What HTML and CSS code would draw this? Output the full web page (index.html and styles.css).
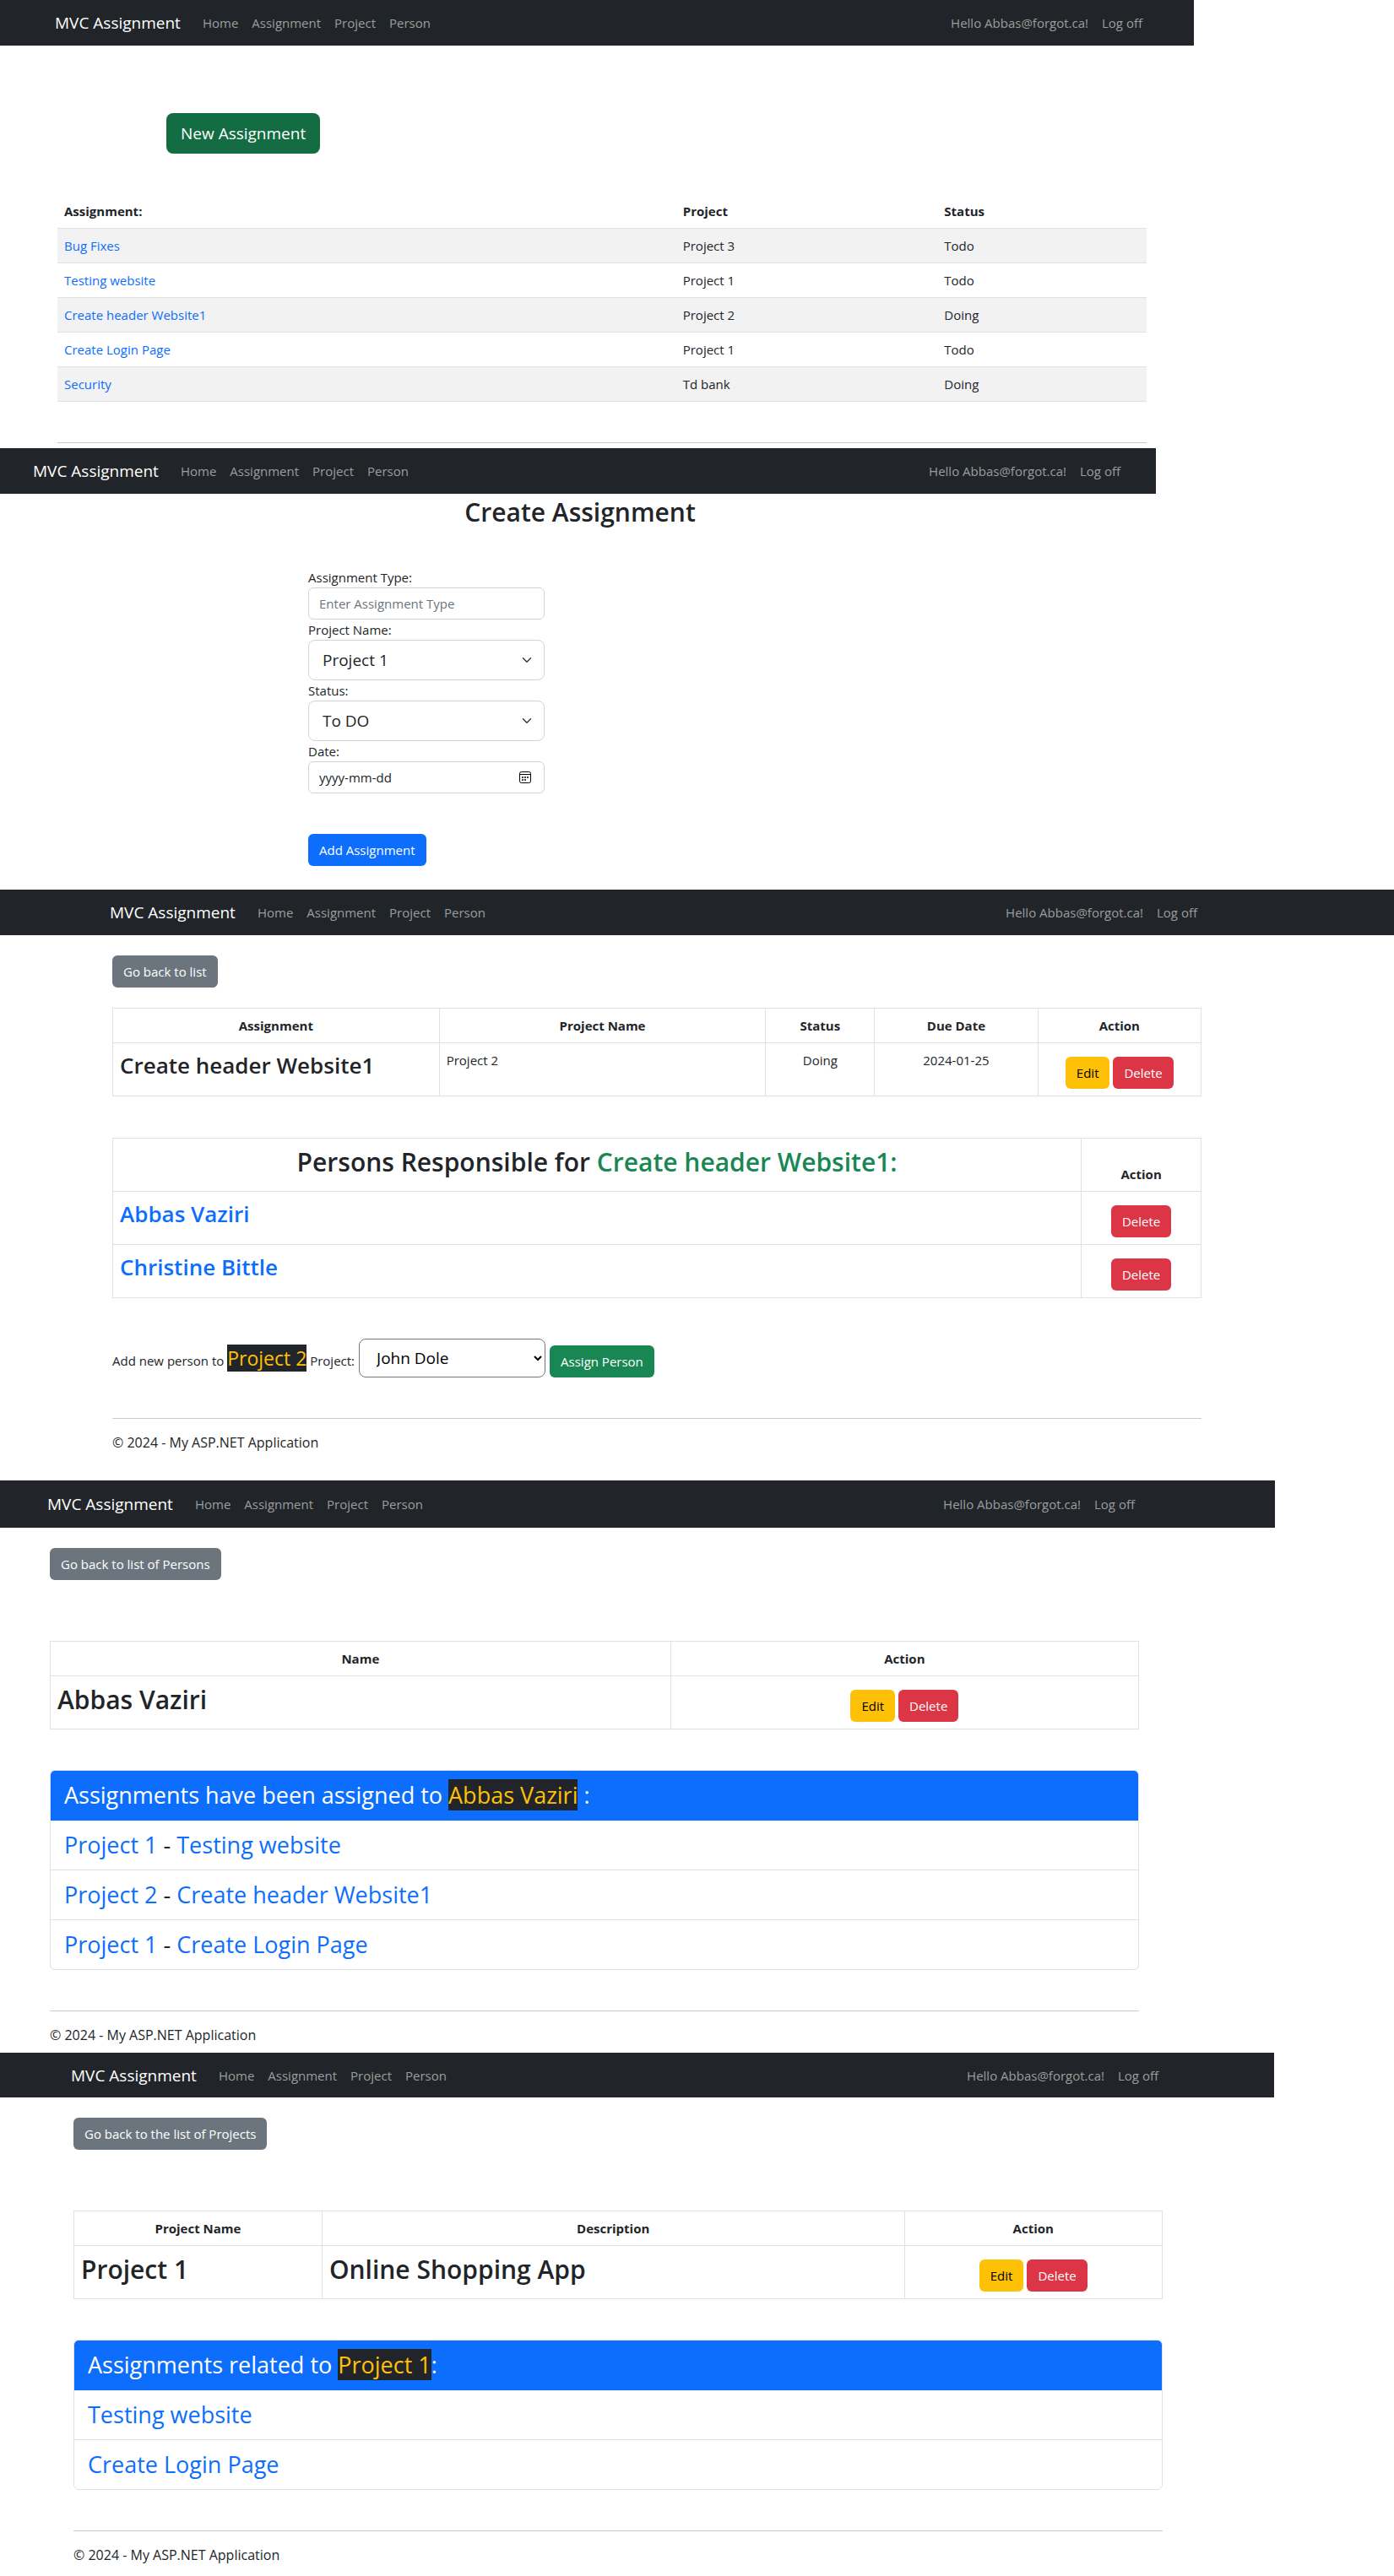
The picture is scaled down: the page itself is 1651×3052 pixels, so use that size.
FILE: index.html
```html
<!DOCTYPE html>
<html lang="en">
<head>
<meta charset="utf-8">
<meta name="viewport" content="width=device-width, initial-scale=1">
<title>MVC Assignment</title>
<link rel="stylesheet" href="styles.css">
</head>
<body>

<section class="screen screen-list">
  <header class="navbar">
    <nav class="nav-inner">
      <a class="brand" href="#">MVC Assignment</a>
      <a class="nav-link" href="#">Home</a>
      <a class="nav-link" href="#">Assignment</a>
      <a class="nav-link" href="#">Project</a>
      <a class="nav-link" href="#">Person</a>
      <a class="nav-link nav-user" href="#">Hello Abbas@forgot.ca!</a>
      <a class="nav-link" href="#">Log off</a>
    </nav>
  </header>
  <div class="content">
    <button class="btn btn-lg btn-new" type="button">New Assignment</button>
    <table class="table table-striped">
      <colgroup><col class="w-list-name"><col class="w-list-project"><col></colgroup>
      <thead><tr><th>Assignment:</th><th>Project</th><th>Status</th></tr></thead>
      <tbody>
        <tr><td><a href="#">Bug Fixes</a></td><td>Project 3</td><td>Todo</td></tr>
        <tr><td><a href="#">Testing website</a></td><td>Project 1</td><td>Todo</td></tr>
        <tr><td><a href="#">Create header Website1</a></td><td>Project 2</td><td>Doing</td></tr>
        <tr><td><a href="#">Create Login Page</a></td><td>Project 1</td><td>Todo</td></tr>
        <tr><td><a href="#">Security</a></td><td>Td bank</td><td>Doing</td></tr>
      </tbody>
    </table>
    <hr>
  </div>
</section>

<section class="screen screen-create">
  <header class="navbar">
    <nav class="nav-inner">
      <a class="brand" href="#">MVC Assignment</a>
      <a class="nav-link" href="#">Home</a>
      <a class="nav-link" href="#">Assignment</a>
      <a class="nav-link" href="#">Project</a>
      <a class="nav-link" href="#">Person</a>
      <a class="nav-link nav-user" href="#">Hello Abbas@forgot.ca!</a>
      <a class="nav-link" href="#">Log off</a>
    </nav>
  </header>
  <div class="content">
    <h1 class="title title-center">Create Assignment</h1>
    <form class="create-form">
      <label for="type">Assignment Type:</label>
      <input class="control" id="type" type="text" placeholder="Enter Assignment Type">
      <label for="project">Project Name:</label>
      <div class="field">
        <select class="control control-lg" id="project"><option>Project 1</option></select>
        <svg class="field-icon" width="16" height="12" viewBox="0 0 16 16" fill="none" stroke="#343a40" stroke-width="2" stroke-linecap="round" stroke-linejoin="round"><path d="m2 5 6 6 6-6"/></svg>
      </div>
      <label for="status">Status:</label>
      <div class="field">
        <select class="control control-lg" id="status"><option>To DO</option></select>
        <svg class="field-icon" width="16" height="12" viewBox="0 0 16 16" fill="none" stroke="#343a40" stroke-width="2" stroke-linecap="round" stroke-linejoin="round"><path d="m2 5 6 6 6-6"/></svg>
      </div>
      <label for="date">Date:</label>
      <div class="field">
        <input class="control control-date" id="date" type="text" placeholder="yyyy-mm-dd">
        <svg class="field-icon" width="17" height="14" viewBox="0 0 17 14"><rect x=".5" y=".5" width="13" height="13" rx="2" fill="none" stroke="#000"/><path d="M1 3.500h12" stroke="#000"/><path fill="#444" d="M3 6h2v2H3zM6 6h2v2H6zM9 6h2v2H9zM3 9h2v2H3zM6 9h2v2H6z"/></svg>
      </div>
      <button class="btn btn-primary" type="button">Add Assignment</button>
    </form>
  </div>
</section>

<section class="screen screen-assignment">
  <header class="navbar">
    <nav class="nav-inner">
      <a class="brand" href="#">MVC Assignment</a>
      <a class="nav-link" href="#">Home</a>
      <a class="nav-link" href="#">Assignment</a>
      <a class="nav-link" href="#">Project</a>
      <a class="nav-link" href="#">Person</a>
      <a class="nav-link nav-user" href="#">Hello Abbas@forgot.ca!</a>
      <a class="nav-link" href="#">Log off</a>
    </nav>
  </header>
  <div class="content">
    <button class="btn btn-secondary" type="button">Go back to list</button>
    <table class="table table-bordered">
      <colgroup><col class="w-30"><col class="w-30"><col class="w-10"><col class="w-15"><col class="w-15"></colgroup>
      <thead><tr><th>Assignment</th><th>Project Name</th><th>Status</th><th>Due Date</th><th>Action</th></tr></thead>
      <tbody>
        <tr>
          <td><h3 class="subtitle">Create header Website1</h3></td>
          <td>Project 2</td>
          <td class="center">Doing</td>
          <td class="center">2024-01-25</td>
          <td><div class="actions"><button class="btn btn-warning" type="button">Edit</button><button class="btn btn-danger" type="button">Delete</button></div></td>
        </tr>
      </tbody>
    </table>
    <table class="table table-bordered">
      <colgroup><col class="w-89"><col></colgroup>
      <thead><tr><th><h2 class="title">Persons Responsible for <span class="green">Create header Website1:</span></h2></th><th>Action</th></tr></thead>
      <tbody>
        <tr><td><h3 class="subtitle"><a href="#">Abbas Vaziri</a></h3></td><td><div class="actions"><button class="btn btn-danger" type="button">Delete</button></div></td></tr>
        <tr><td><h3 class="subtitle"><a href="#">Christine Bittle</a></h3></td><td><div class="actions"><button class="btn btn-danger" type="button">Delete</button></div></td></tr>
      </tbody>
    </table>
    <form class="assign-form">
      <label for="person">Add new person to <mark class="mark-md">Project 2</mark> Project:</label>
      <div class="field field-person">
        <select class="control control-lg control-plain" id="person"><option>John Dole</option></select>
        <svg class="field-icon" width="10" height="7" viewBox="0 0 10 7" fill="none" stroke="#000" stroke-width="2"><path d="m1 1 4 4 4-4"/></svg>
      </div>
      <button class="btn btn-success" type="button">Assign Person</button>
    </form>
    <hr>
    <footer>© 2024 - My ASP.NET Application</footer>
  </div>
</section>

<section class="screen screen-person">
  <header class="navbar">
    <nav class="nav-inner">
      <a class="brand" href="#">MVC Assignment</a>
      <a class="nav-link" href="#">Home</a>
      <a class="nav-link" href="#">Assignment</a>
      <a class="nav-link" href="#">Project</a>
      <a class="nav-link" href="#">Person</a>
      <a class="nav-link nav-user" href="#">Hello Abbas@forgot.ca!</a>
      <a class="nav-link" href="#">Log off</a>
    </nav>
  </header>
  <div class="content">
    <button class="btn btn-secondary" type="button">Go back to list of Persons</button>
    <table class="table table-bordered table-lower">
      <colgroup><col class="w-57"><col></colgroup>
      <thead><tr><th>Name</th><th>Action</th></tr></thead>
      <tbody>
        <tr>
          <td><h2 class="title">Abbas Vaziri</h2></td>
          <td><div class="actions"><button class="btn btn-warning" type="button">Edit</button><button class="btn btn-danger" type="button">Delete</button></div></td>
        </tr>
      </tbody>
    </table>
    <ul class="list">
      <li class="list-head">Assignments have been assigned to <mark>Abbas Vaziri</mark> :</li>
      <li><a href="#">Project 1</a> - <a href="#">Testing website</a></li>
      <li><a href="#">Project 2</a> - <a href="#">Create header Website1</a></li>
      <li><a href="#">Project 1</a> - <a href="#">Create Login Page</a></li>
    </ul>
    <hr>
    <footer>© 2024 - My ASP.NET Application</footer>
  </div>
</section>

<section class="screen screen-project">
  <header class="navbar">
    <nav class="nav-inner">
      <a class="brand" href="#">MVC Assignment</a>
      <a class="nav-link" href="#">Home</a>
      <a class="nav-link" href="#">Assignment</a>
      <a class="nav-link" href="#">Project</a>
      <a class="nav-link" href="#">Person</a>
      <a class="nav-link nav-user" href="#">Hello Abbas@forgot.ca!</a>
      <a class="nav-link" href="#">Log off</a>
    </nav>
  </header>
  <div class="content">
    <button class="btn btn-secondary" type="button">Go back to the list of Projects</button>
    <table class="table table-bordered table-lower">
      <colgroup><col class="w-project-name"><col class="w-project-desc"><col></colgroup>
      <thead><tr><th>Project Name</th><th>Description</th><th>Action</th></tr></thead>
      <tbody>
        <tr>
          <td><h2 class="title">Project 1</h2></td>
          <td><h2 class="title">Online Shopping App</h2></td>
          <td><div class="actions"><button class="btn btn-warning" type="button">Edit</button><button class="btn btn-danger" type="button">Delete</button></div></td>
        </tr>
      </tbody>
    </table>
    <ul class="list">
      <li class="list-head">Assignments related to <mark>Project 1</mark>:</li>
      <li><a href="#">Testing website</a></li>
      <li><a href="#">Create Login Page</a></li>
    </ul>
    <hr>
    <footer>© 2024 - My ASP.NET Application</footer>
  </div>
</section>

</body>
</html>
```
FILE: styles.css
```css
*, *::before, *::after { box-sizing: border-box; }

body {
  margin: 0;
  background: #fff;
  color: #212529;
  font: 15px/24px "Open Sans", "Noto Sans", sans-serif;
}

a { color: #0d6efd; text-decoration: none; }

/* Each screen keeps its own left gutter and bar width */
.screen { --gutter: 64px; --bar: 100%; }
.screen-list { --gutter: 64px; --bar: 1414px; }
.screen-create { --gutter: 38px; --bar: 1369px; }
.screen-assignment { --gutter: 129px; }
.screen-person { --gutter: 55px; --bar: 1510px; }
.screen-project { --gutter: 83px; --bar: 1509px; }

.navbar {
  max-width: var(--bar);
  padding: 7px 0 7px var(--gutter);
  background: #212529;
}
.nav-inner {
  display: flex;
  align-items: center;
  max-width: 1297px;
  height: 40px;
}
.screen-person .nav-inner { height: 42px; }
.screen-project .nav-inner { height: 39px; }
.brand { margin: 0 18px 0 1px; color: #fff; font-size: 19px; }
.nav-link { padding: 0 8px; color: #9b9d9e; }
.nav-user { margin-left: auto; }

.content {
  display: flow-root;
  max-width: calc(1294px + var(--gutter));
  padding-left: calc(var(--gutter) + 4px);
}

.btn {
  height: 38px;
  padding: 0 13px;
  border: 0;
  border-radius: 6px;
  color: #fff;
  font: inherit;
  white-space: nowrap;
}
.btn-lg { height: 48px; padding: 0 17px; border-radius: 8px; font-size: 19px; }
.btn-new { background: #146c43; }
.btn-primary { background: #0d6efd; }
.btn-secondary { background: #6c757d; }
.btn-success { background: #198754; }
.btn-warning { background: #ffc107; color: #000; }
.btn-danger { background: #dc3545; }

.table { width: 100%; border-collapse: collapse; table-layout: fixed; }
.table th, .table td { padding: 8px; vertical-align: top; }
.table th { font-weight: 700; vertical-align: bottom; }
.table-striped { text-align: left; }
.table-striped tr { border-bottom: 1px solid #dee2e6; }
.table-striped tbody tr:nth-child(odd) { background: #f2f2f2; }
.table-bordered th, .table-bordered td { border: 1px solid #dee2e6; }
.table-bordered th, .center { text-align: center; }

.w-list-name { width: 56.8%; }
.w-list-project { width: 24%; }
.w-10 { width: 10%; }
.w-15 { width: 15%; }
.w-30 { width: 30%; }
.w-57 { width: 57%; }
.w-89 { width: 89%; }
.w-project-name { width: 22.8%; }
.w-project-desc { width: 53.5%; }

.title { margin: 0 0 6px; font-size: 30px; font-weight: 600; line-height: 40px; }
.title-center { text-align: center; }
.subtitle { margin: 0 0 6px; font-size: 26px; font-weight: 600; line-height: 36px; }
.green { color: #198754; }
.actions { display: flex; justify-content: center; gap: 4px; padding-top: 8px; }

mark { background: #212529; color: #ffc107; }
.mark-md { font-size: 23px; }

hr { margin: 48px 0 0; border: 0; border-top: 1px solid #c8c9ca; }
footer { padding: 16px 0 0; font-size: 16px; }

/* Form controls */
.control {
  display: block;
  width: 100%;
  height: 38px;
  padding: 0 12px;
  border: 1px solid #ced4da;
  border-radius: 6px;
  background: #fff;
  color: #212529;
  font: inherit;
  appearance: none;
}
.control::placeholder { color: #6c757d; opacity: 1; }
.control-date::placeholder { color: #212529; }
.control-lg { height: 48px; padding: 0 16px; border-radius: 8px; font-size: 19px; }
.control-plain { height: 46px; padding-left: 20px; border-color: #767676; color: #000; }
.field { display: grid; align-items: center; }
.field > * { grid-area: 1 / 1; }
.field-icon { justify-self: end; margin-right: 13px; pointer-events: none; }
.field-person { width: 221px; }
.field-person .field-icon { margin-right: 4px; }

.create-form { display: grid; width: 280px; margin: 45px 0 0 323px; }
.create-form .btn { justify-self: start; margin-top: 48px; }
.assign-form { display: flex; align-items: flex-end; gap: 5px; height: 46px; margin-top: 48px; }
.assign-form label { line-height: 40px; }

/* Grouped list */
.list {
  margin: 48px 0 0;
  padding: 0;
  border: 1px solid #dee2e6;
  border-radius: 6px;
  overflow: hidden;
  list-style: none;
  font-size: 27px;
  line-height: 42px;
}
.list li { padding: 8px 16px; }
.list li + li { border-top: 1px solid #dee2e6; }
.list .list-head { margin: -1px -1px 0; padding: 9px 17px; background: #0d6efd; color: #fff; }
.list .list-head + li { border-top: 0; }

/* Vertical rhythm of the individual screens */
.screen-list .btn-new { display: block; margin: 80px 0 0 129px; }
.screen-list .table { margin-top: 48px; }
.screen-list { padding-bottom: 6px; }
.screen-create .title { margin-top: 2px; }
.screen-create { padding-bottom: 28px; }
.content > .btn-secondary { display: block; margin-top: 24px; }
.screen-assignment .table { margin-top: 24px; }
.screen-assignment .table + .table { margin-top: 49px; }
.screen-assignment { padding-bottom: 33px; }
.table-lower { margin-top: 72px; }
.screen-person { padding-bottom: 9px; }
.screen-project { padding-bottom: 13px; }
```
